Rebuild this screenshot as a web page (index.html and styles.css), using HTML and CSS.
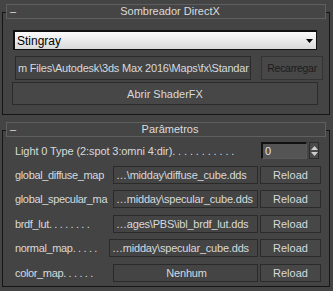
FILE: index.html
```html
<!DOCTYPE html>
<html lang="pt">
<head>
    <meta charset="UTF-8">
    <title>Sombreador DirectX</title>
    <link rel="stylesheet" href="styles.css">
</head>
<body>
    <div class="group first">
        <div class="rollout-head"><span class="toggle">–</span>Sombreador DirectX</div>

        <div class="dropdown">
            <span>Stingray</span>
            <svg class="caret" width="7" height="4" viewBox="0 0 7 4"><path d="M0 0h7L3.5 4z" fill="#000"/></svg>
        </div>

        <div class="path-row">
            <div class="field path">m Files\Autodesk\3ds Max 2016\Maps\fx\Standar</div>
            <button class="btn disabled">Recarregar</button>
        </div>

        <button class="btn wide">Abrir ShaderFX</button>
    </div>

    <div class="group second">
        <div class="rollout-head"><span class="toggle">–</span>Parâmetros</div>

        <div class="light-row">
            <div class="light-label">Light 0 Type (2:spot 3:omni 4:dir). . . . . . . . . . .</div>
            <div class="spinner">
                <div class="spin-field">0</div>
                <div class="spin-arrows">
                    <svg width="7" height="4" viewBox="0 0 7 4"><path d="M0 4h7L3.5 0z" fill="#cfcfcf"/></svg>
                    <svg width="7" height="4" viewBox="0 0 7 4"><path d="M0 0h7L3.5 4z" fill="#cfcfcf"/></svg>
                </div>
            </div>
        </div>

        <div class="map-row">
            <div class="label">global_diffuse_map</div>
            <div class="field map">…\midday\diffuse_cube.dds</div>
            <button class="btn reload">Reload</button>
        </div>
        <div class="map-row">
            <div class="label">global_specular_ma</div>
            <div class="field map">…midday\specular_cube.dds</div>
            <button class="btn reload">Reload</button>
        </div>
        <div class="map-row">
            <div class="label">brdf_lut. . . . . . . .</div>
            <div class="field map">…ages\PBS\ibl_brdf_lut.dds</div>
            <button class="btn reload">Reload</button>
        </div>
        <div class="map-row">
            <div class="label short">normal_map. . . . .</div>
            <div class="field map wide-map">…midday\specular_cube.dds</div>
            <button class="btn reload">Reload</button>
        </div>
        <div class="map-row">
            <div class="label">color_map. . . . . .</div>
            <div class="field map center">Nenhum</div>
            <button class="btn reload">Reload</button>
        </div>
    </div>
</body>
</html>
```

FILE: styles.css
```css
body {
    margin: 0;
    background-color: #444444;
    font-family: "Liberation Sans", Arial, sans-serif;
    font-size: 11px;
    color: #d6dadd;
    width: 333px;
    height: 291px;
    overflow: hidden;
}
.group {
    border: 1px solid #151515;
    margin: 12px 3px 0 2px;
    padding: 0 0 9px 0;
}
.group.second {
    margin-top: 15px;
    padding-bottom: 4px;
}
.rollout-head {
    margin: -9px 3px 0 3px;
    height: 13px;
    line-height: 13px;
    border: 1px solid #5f5f5f;
    background-color: #454545;
    text-align: center;
    color: #dcdcdc;
}
.toggle {
    float: left;
    margin-left: 3px;
    width: 5px;
    text-align: left;
}
.dropdown {
    margin: 11px 12px 0 10px;
    height: 17px;
    border: 2px solid #101010;
    border-right-width: 1px;
    border-bottom-width: 1px;
    background: linear-gradient(#fbfbfb, #d9d9d9);
    display: flex;
    align-items: center;
    justify-content: space-between;
    padding: 0 3px 0 2px;
    color: #000;
    font-size: 12px;
}
.path-row {
    display: flex;
    margin: 6px 6px 0 12px;
    gap: 10px;
}
.field {
    border: 1px solid #2a2a2a;
    background-color: #444;
    white-space: nowrap;
    overflow: hidden;
    box-sizing: border-box;
}
.field.path {
    width: 237px;
    height: 24px;
    line-height: 22px;
    padding-left: 2px;
    letter-spacing: -0.2px;
}
.btn {
    font-family: inherit;
    font-size: 11px;
    color: #d6dadd;
    background-color: #474747;
    border: 1px solid #2b2b2b;
    padding: 0;
    box-sizing: border-box;
}
.btn.disabled {
    width: 62px;
    height: 24px;
    color: #1c1c1c;
    border-color: #333;
    font-size: 10.5px;
    letter-spacing: -0.3px;
}
.btn.wide {
    display: block;
    margin: 2px 0 0 9px;
    width: 306px;
    height: 23px;
}
.light-row {
    display: flex;
    align-items: center;
    margin: 5px 0 0 12px;
    height: 17px;
}
.light-label {
    width: 234px;
    white-space: nowrap;
    overflow: hidden;
    letter-spacing: -0.1px;
}
.spinner {
    display: flex;
    margin-left: 12px;
    gap: 2px;
}
.spin-field {
    width: 46px;
    height: 17px;
    box-sizing: border-box;
    border: 2px solid #111;
    border-right: 1px solid #5a5a5a;
    border-bottom: 1px solid #5a5a5a;
    background-color: #545454;
    line-height: 14px;
    padding-left: 2px;
    color: #e2e2e2;
}
.spin-arrows {
    width: 10px;
    height: 17px;
    box-sizing: border-box;
    border: 1px solid #2b2b2b;
    background-color: #4a4a4a;
    display: flex;
    flex-direction: column;
    align-items: center;
    justify-content: center;
    gap: 2px;
}
.spin-arrows svg {
    display: block;
}
.map-row {
    display: flex;
    align-items: center;
    margin: 7px 0 0 12px;
    height: 17.5px;
}
.label {
    width: 95px;
    margin-right: 3px;
    white-space: nowrap;
    overflow: hidden;
    letter-spacing: -0.35px;
}
.label.short {
    width: 91px;
}
.field.map {
    width: 145px;
    height: 18px;
    line-height: 16px;
    padding-left: 2px;
    letter-spacing: -0.2px;
}
.field.map.wide-map {
    width: 149px;
}
.field.center {
    text-align: center;
}
.btn.reload {
    margin-left: 2px;
    width: 61px;
    height: 18px;
}
```
